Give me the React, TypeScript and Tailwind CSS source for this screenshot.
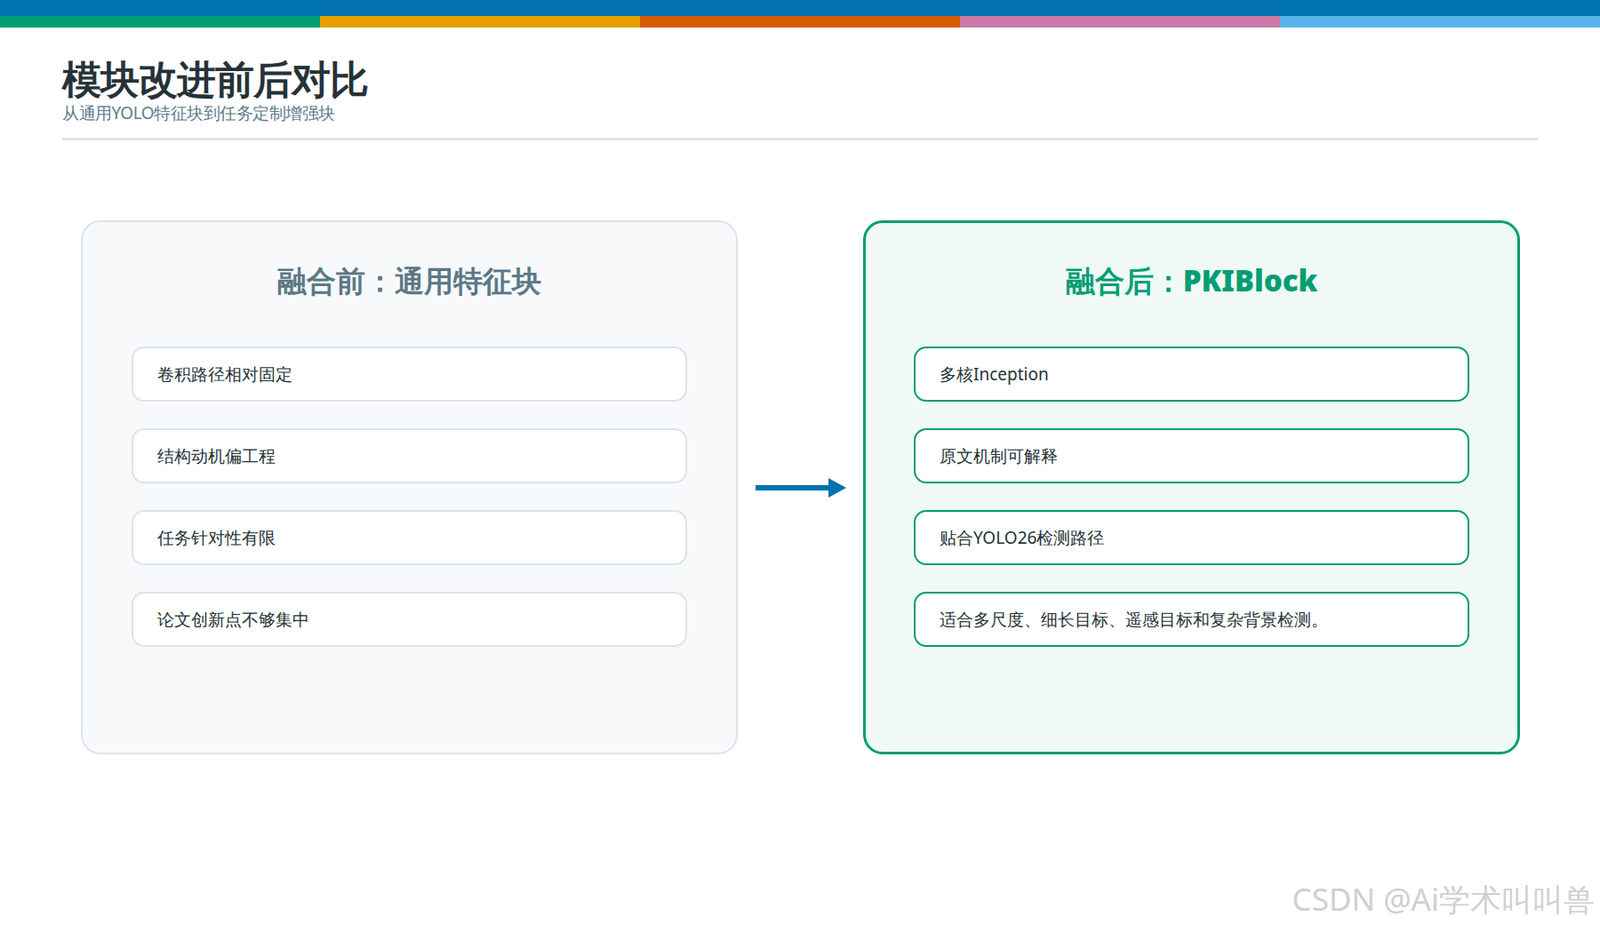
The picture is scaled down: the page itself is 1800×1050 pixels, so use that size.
const before = ["卷积路径相对固定", "结构动机偏工程", "任务针对性有限", "论文创新点不够集中"];
const after = ["多核Inception", "原文机制可解释", "贴合YOLO26检测路径", "适合多尺度、细长目标、遥感目标和复杂背景检测。"];

export default function App() {
  return (
    <div className="relative w-[1800px] h-[1050px] bg-white overflow-hidden font-['Noto_Sans','Noto_Sans_CJK_SC',sans-serif]">
      <div className="h-[18px] bg-[#0072B2]" />
      <div className="flex h-[13px]">
        <div className="flex-1 bg-[#009E73]" />
        <div className="flex-1 bg-[#E69F00]" />
        <div className="flex-1 bg-[#D55E00]" />
        <div className="flex-1 bg-[#CC79A7]" />
        <div className="flex-1 bg-[#56B4E9]" />
      </div>

      <div className="px-[70px] pt-[32px]">
        <h1 className="text-[44px] leading-[50px] font-black text-[#263238] tracking-[-1px]">模块改进前后对比</h1>
        <p className="text-[19px] leading-[24px] text-[#607d8b] mt-[2px] tracking-[-0.5px]">从通用YOLO特征块到任务定制增强块</p>
        <div className="mt-[16px] h-[3px] bg-[#dde3ea]" />
      </div>

      <div className="flex items-center pl-[91px] mt-[90px]">
        <div className="w-[739px] h-[601px] rounded-[22px] border-2 border-[#dbe3ec] bg-[#f7f9fb] px-[55px] pt-[44px]">
          <h2 className="text-center text-[33px] font-black text-[#5b7887] leading-[44px]">融合前：通用特征块</h2>
          <div className="mt-[52px] flex flex-col gap-[30px]">
            {before.map((t) => (
              <div key={t} className="h-[62px] rounded-[14px] border-2 border-[#dbe3ec] bg-white flex items-center px-[27px] text-[19px] text-[#263238]">{t}</div>
            ))}
          </div>
        </div>

        <div className="w-[141px] flex justify-center">
          <svg width="102" height="26" viewBox="0 0 102 26">
            <rect x="0" y="10" width="84" height="6" fill="#0072B2" />
            <path d="M82 2 L102 13 L82 24 Z" fill="#0072B2" />
          </svg>
        </div>

        <div className="w-[739px] h-[601px] rounded-[22px] border-[3px] border-[#009E73] bg-[#f0f9f5] px-[54px] pt-[43px]">
          <h2 className="text-center text-[33px] font-black text-[#009E73] leading-[44px]">融合后：PKIBlock</h2>
          <div className="mt-[52px] flex flex-col gap-[30px]">
            {after.map((t) => (
              <div key={t} className="h-[62px] rounded-[14px] border-2 border-[#009E73] bg-white flex items-center px-[27px] text-[19px] text-[#263238]">{t}</div>
            ))}
          </div>
        </div>
      </div>

      <div className="absolute right-[6px] bottom-[12px] text-[35px] text-[#d0d0d0] font-['Liberation_Sans','Noto_Sans_CJK_SC',sans-serif]">CSDN @Ai学术叫叫兽</div>
    </div>
  );
}
